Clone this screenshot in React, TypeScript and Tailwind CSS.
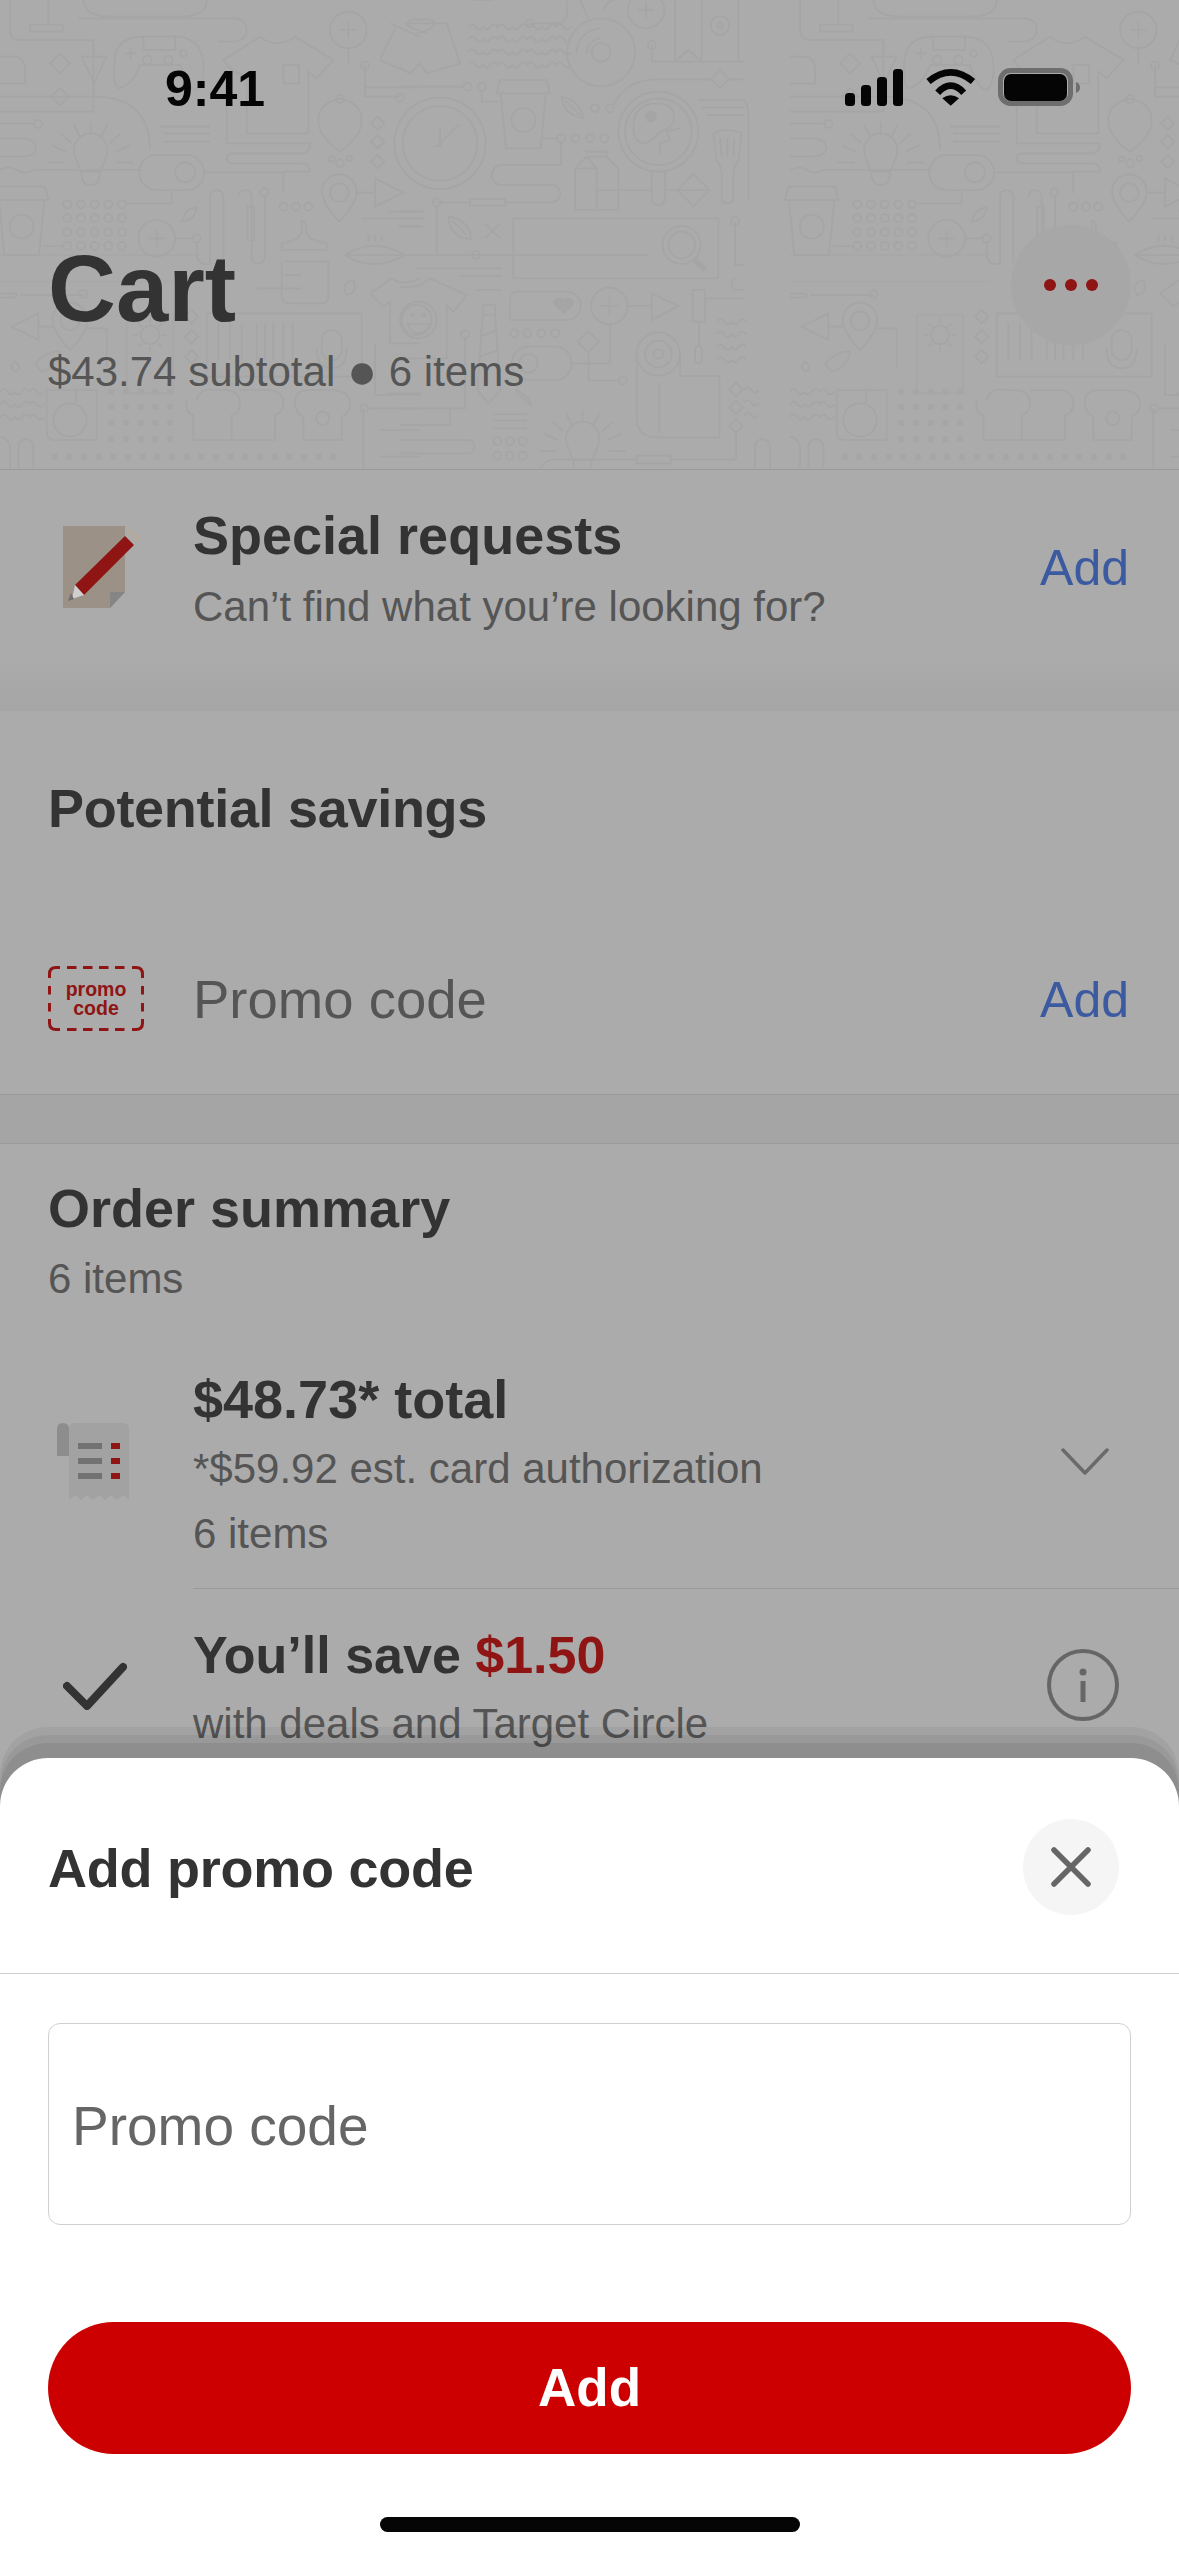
import React from "react";

const FONT = "font-['Liberation_Sans',Arial,sans-serif]";

function range(from: number, to: number, step: number) {
  const out: number[] = [];
  for (let v = from; v <= to; v += step) out.push(v);
  return out;
}

function Bulb({ x, y }: { x: number; y: number }) {
  return (
    <g transform={`translate(${x} ${y})`}>
      <path d="M-28 75 Q-50 30 -50 10 A50 50 0 0 1 50 10 Q50 30 28 75 Q28 115 0 115 Q-28 115 -28 75 Z M-28 75 H28" />
      <path d="M0 -75 V-35 M-50 -65 L-32 -30 M50 -65 L32 -30 M-90 -40 L-58 -10 M90 -40 L58 -10 M-118 -5 L-75 15 M118 -5 L75 15 M-130 48 H-78 M130 48 H78" />
    </g>
  );
}

function Cup({ x, y }: { x: number; y: number }) {
  return (
    <g transform={`translate(${x} ${y})`}>
      <path d="M-80 -80 L-70 -120 H70 L80 -80 Z M-68 -80 L-52 85 H52 L68 -80" />
      <circle cx="0" cy="0" r="36" />
    </g>
  );
}

function Plus({ x, y }: { x: number; y: number }) {
  return (
    <g transform={`translate(${x} ${y})`}>
      <circle r="55" />
      <path d="M-25 0 H25 M0 -25 V25" />
    </g>
  );
}

function Diamond({ x, y, r = 26 }: { x: number; y: number; r?: number }) {
  return <path d={`M${x - r} ${y} L${x} ${y - r} L${x + r} ${y} L${x} ${y + r} Z`} />;
}

function Pin({ x, y }: { x: number; y: number }) {
  return (
    <g transform={`translate(${x} ${y})`}>
      <path d="M0 75 Q-52 20 -52 -15 A52 52 0 0 1 52 -15 Q52 20 0 75 Z" />
      <circle cx="0" cy="-12" r="28" />
    </g>
  );
}

function Waves({ x, y, w, rows }: { x: number; y: number; w: number; rows: number }) {
  const step = 44;
  let d = "";
  for (let r = 0; r < rows; r++) {
    d += `M${x} ${y + r * 38}`;
    for (let i = 0; i * step < w; i++) {
      d += ` q${step / 4} ${i % 2 ? 16 : -16} ${step / 2} 0 t${step / 2} 0`;
    }
    d += " ";
  }
  return <path d={d} />;
}

// line-art wallpaper behind the cart header; coordinates are in 3x pixels
function HeaderPattern() {
  return (
    <svg className="absolute inset-0" width="1179" height="468" viewBox="0 0 3537 1404" fill="none" stroke="#a5a5a5" strokeWidth="5">
      <defs>
        <g id="tile">
          {/* left third */}
          <path d="M30 0 V90 Q30 120 60 120 H280 V335 H0 M90 75 H188 V95 H90 Z M145 0 V75" />
          <path d="M235 55 H700 Q740 55 740 90 Q740 125 690 125 H655" />
          <path d="M250 0 Q255 50 330 50 H540 Q620 50 620 0" />
          <path d="M355 265 Q335 250 345 170 Q355 110 430 110 H525 Q600 110 610 185 Q615 250 590 270 Q560 265 540 195 H420 Q400 255 355 265 Z M430 110 V150 H525 V110" />
          <path d="M375 160 H410 M392 143 V177" />
          <circle cx="442" cy="180" r="13" /><circle cx="505" cy="180" r="13" /><circle cx="550" cy="160" r="10" />
          <Diamond x={180} y={190} r={30} />
          <path d="M245 170 H320 L282 250 Z" />
          <path d="M0 170 H40 Q75 170 75 210 V250 H0" />
          <Diamond x={180} y={290} r={26} />
          <path d="M0 290 H280 Q450 290 450 450" />
          <path d="M0 370 H100 M0 415 H60 Q108 415 108 445 Q108 470 60 470 H0" />
          <circle cx="115" cy="372" r="12" />
          <Bulb x={272} y={440} />
          <path d="M480 380 H630 M490 400 H630 M490 425 H630" />
          <path d="M670 180 L780 110 Q830 150 885 110 L1000 180 L950 235 L925 215 V400 H740 V225 Q700 225 670 180 Z M680 300 V430 H930 Q930 460 905 460 H700 Q680 460 680 475 Q680 490 700 490 H905 Q930 490 930 515 H850 V580" />
          <path d="M850 195 H897 V250 H850 Z" />
          <path d="M1020 295 Q1085 310 1085 360 Q1085 410 1020 455 Q955 410 955 360 Q955 310 1020 295 Z" />
          <circle cx="1020" cy="297" r="12" />
          <Diamond x={1133} y={370} r={20} /><Diamond x={1133} y={425} r={20} /><Diamond x={1133} y={485} r={20} />
          <circle cx="995" cy="477" r="8" /><circle cx="1020" cy="490" r="12" /><circle cx="1048" cy="475" r="8" />
          <Plus x={1045} y={90} />
          <path d="M1045 145 V195 M1095 195 V290 H1200 M1095 262 H1260" />
          <circle cx="1095" cy="197" r="12" /><circle cx="1200" cy="293" r="12" />
          <path d="M1170 70 L1260 110 M1140 180 L1190 75 M1140 180 L1230 220" />
          <path d="M0 510 Q30 495 50 510 T100 510 H425 M470 465 H560 A52 52 0 0 1 560 570 H470 A52 52 0 0 1 470 465 Z M610 517 H850" />
          <circle cx="555" cy="517" r="30" />
          <path d="M515 570 V610 H380" />
          <Cup x={65} y={680} />
          {range(202, 367, 41).map((x) => range(613, 738, 41.6).map((y) => <circle key={`${x}-${y}`} cx={x} cy={y} r="12" />))}
          <path d="M130 738 H190" />
          <Plus x={470} y={715} />
          <path d="M525 715 H578" />
          <circle cx="590" cy="715" r="12" />
          <path d="M590 728 V770 A30 30 0 0 0 630 790 V590 A20 20 0 0 1 670 590 V790 M715 590 A20 20 0 0 1 755 590 V770 A20 20 0 0 0 795 770 V590" />
          <circle cx="793" cy="577" r="12" />
          <path d="M742 620 H762 V720 H742 Z" />
          <path d="M545 665 Q555 625 590 622 Q585 660 545 665 Z" />
          <circle cx="850" cy="620" r="12" /><circle cx="888" cy="620" r="12" /><circle cx="925" cy="620" r="12" />
          <Pin x={1018} y={590} />
          <path d="M1070 578 H1125 M1125 535 L1210 578 L1125 620 Z" />
          <path d="M1085 655 H1260 M1165 635 H1260 M1195 678 H1260" />
          <path d="M905 662 Q918 660 918 690 Q918 720 980 730 V750 H845 V730 Q905 720 905 690 Z M855 785 H985 V890 Q985 910 965 910 H870 Q845 910 845 890 V785 M850 825 H905 M850 865 H905" />
          <path d="M1035 765 Q1120 710 1215 765 Q1120 820 1035 765 Z M1035 765 H1215 M1105 705 V725 M1125 705 V725 M1145 705 V725" />
          <path d="M0 765 H600 M0 845 H600" strokeOpacity="0.5" />
          <path d="M0 880 H40 Q50 880 50 885 Q50 893 35 893 H0 M60 885 H250" />
          <circle cx="250" cy="882" r="12" />
          <path d="M770 865 H845 M1060 840 Q1020 850 1040 885 Q1075 880 1060 840 Z" />
          <path d="M35 980 L115 940 V1020 Z M115 980 H160" />
          <Pin x={210} y={975} />
          <path d="M260 985 H320 V1100" />
          <path d="M380 945 H520 V1180 H380 Z" strokeOpacity="0.6" />
          <circle cx="450" cy="1005" r="28" />
          <path d="M450 955 V970 M450 1040 V1055 M400 1005 H415 M485 1005 H500 M415 970 L425 980 M475 1030 L485 1040 M485 970 L475 980 M425 1030 L415 1040" />
          <Diamond x={575} y={950} r={20} /><Diamond x={575} y={1010} r={20} /><Diamond x={575} y={1070} r={20} />
          <path d="M620 940 H1085 V1130 H620 Z" />
          <path d="M655 970 V1080 M690 970 V1080 M725 970 V1080 M770 970 V1080 M795 970 V1080 M820 970 V1080 M850 970 V1080 M878 970 V1080" />
          <path d="M965 1020 A30 30 0 0 1 1025 1020 V1050 A30 30 0 0 1 965 1050 Z M950 1045 Q950 1105 995 1105 Q1040 1105 1040 1045" />
          <path d="M1110 880 L1175 835 Q1210 860 1260 835 M1110 880 L1150 920 L1170 905 V1030 H1260 M1125 1030 V1185 H1260" />
          <circle cx="1250" cy="960" r="45" />
          <path d="M45 1085 Q25 1100 45 1115 Q70 1105 45 1085 Z M105 1090 Q145 1050 180 1055 Q175 1100 125 1115 Z" />
          <Waves x={0} y={1175} w={100} rows={3} />
          <path d="M140 1170 H290 V1320 H165 Q140 1320 140 1295 Z" />
          <circle cx="210" cy="1260" r="50" />
          <path d="M228 1170 V1210" />
          <path d="M0 1310 Q25 1315 30 1340 V1404 M55 1404 V1340 A22 22 0 0 1 100 1340 V1404" />
          <path d="M325 1175 H520 M325 1220 H520 M325 1268 H520 M325 1318 H520" strokeWidth="18" strokeDasharray="18 26" stroke="#a6a6a6" />
          <path d="M155 1370 H1035" strokeWidth="18" strokeDasharray="18 26" stroke="#a6a6a6" />
          <path d="M590 1200 A40 40 0 0 1 640 1170 H670 Q720 1170 720 1210 Q720 1240 695 1245 V1320 H580 V1245 Q555 1240 560 1200" />
          <path d="M720 1170 H800 Q850 1170 850 1210 Q850 1240 825 1245 V1320 H695" />
          <path d="M930 1170 H1000 Q1050 1175 1050 1210 Q1050 1240 1025 1250 V1320 H910 V1250 Q885 1240 885 1205 Q885 1170 930 1170 Z" />
          <circle cx="968" cy="1255" r="20" />
          <path d="M1090 1225 V1404 M1104 1225 H1260 M1160 1180 H1260 V1185 M1140 1290 H1260 M1140 1370 H1260" />
          <circle cx="1092" cy="1225" r="12" />

          {/* middle third */}
          <g transform="translate(1200 0)">
            <path d="M15 70 H140 L180 190 L80 220 L60 190 L30 220 L0 200" />
            <path d="M60 60 Q30 50 20 75 Q60 95 80 100 M60 60 Q90 50 105 70 Q90 95 50 100" />
            <Waves x={205} y={80} w={265} rows={4} />
            <path d="M390 70 H470 A30 30 0 0 0 500 30 V0 M220 0 H280" />
            <circle cx="390" cy="70" r="12" />
            <circle cx="603" cy="157" r="102" /><circle cx="603" cy="157" r="28" />
            <path d="M530 160 A73 73 0 0 1 600 85 M560 160 A45 45 0 0 1 600 115" />
            <path d="M540 0 L565 55 M610 30 Q625 0 645 0" />
            <Plus x={738} y={30} />
            <path d="M755 135 V185 H1032 M825 0 V185 L865 150 L905 185 V0" />
            <circle cx="755" cy="135" r="12" />
            <circle cx="960" cy="76" r="28" /><circle cx="960" cy="76" r="8" />
            <path d="M1015 0 V185" />
            <Diamond x={960} y={237} r={28} />
            <path d="M0 260 H190" />
            <circle cx="202" cy="260" r="12" /><circle cx="245" cy="260" r="12" />
            <path d="M245 272 V305 H295" />
            <circle cx="120" cy="430" r="137" /><circle cx="120" cy="430" r="112" />
            <path d="M178 372 L110 440 M120 382 V440 M105 440 L125 430" />
            <Cup x={370} y={360} />
            <path d="M430 415 H470" />
            <circle cx="483" cy="415" r="12" /><circle cx="526" cy="415" r="12" /><circle cx="570" cy="415" r="12" /><circle cx="613" cy="415" r="12" />
            <path d="M483 428 V495 H305 A30 30 0 0 0 305 555 H455 A25 25 0 0 1 455 607 H315 M110 607 H210 M110 620 V765" />
            <circle cx="110" cy="607" r="12" />
            <path d="M210 597 H315 V617 H210 Z" />
            <path d="M485 290 Q540 300 550 355 Q490 345 485 290 Z M495 300 L540 345" />
            <circle cx="585" cy="325" r="12" /><circle cx="630" cy="325" r="12" />
            <path d="M640 315 Q680 238 770 238 H935 M985 238 H1032" />
            <circle cx="775" cy="395" r="120" /><circle cx="775" cy="395" r="100" />
            <path d="M700 385 Q700 310 770 310 Q822 310 822 350 Q822 385 780 395 Q750 430 730 430 Q700 425 700 385 Z" />
            <circle cx="753" cy="350" r="15" fill="#a5a5a5" />
            <path d="M780 465 V430 L810 420 L800 395 L840 385" />
            <path d="M755 515 V595 A20 20 0 0 0 795 595 V515" />
            <path d="M940 400 Q980 380 1025 400 L1015 480 Q1000 505 1000 520 V600 A20 20 0 0 1 965 600 V520 Q965 505 950 480 Z M960 415 L965 470 M982 415 V470 M1003 415 L1000 470" />
            <path d="M895 300 H1032 M905 322 H1032 M918 345 H1032 M1032 300 Q1045 310 1045 350 V600" />
            <path d="M525 630 V505 L560 470 H620 L655 505 V630 Z M525 505 H590 V630 M560 470 L590 505 M555 455 H620 V470 M590 570 H755" />
            <Diamond x={880} y={570} r={48} />
            <path d="M795 570 H832 M835 570 H925" />
            <path d="M340 655 H955 V835 H340 Z M0 765 H745" />
            <circle cx="227" cy="765" r="12" />
            <circle cx="845" cy="735" r="57" /><circle cx="845" cy="735" r="40" />
            <path d="M880 775 L915 810" strokeWidth="16" />
            <path d="M145 650 Q210 660 213 717 Q150 715 145 650 Z M155 660 L200 705 M255 670 L300 715 M300 670 L255 715" />
            <path d="M0 635 H70 M0 655 H70 M0 680 H70" />
            <path d="M50 805 H305 M180 828 H305 M228 870 H305" />
            <path d="M0 860 Q50 870 90 835 L200 885 L160 935 L140 915 V1075 H0" />
            <circle cx="55" cy="960" r="55" />
            <circle cx="38" cy="945" r="4" /><circle cx="72" cy="945" r="4" />
            <path d="M22 972 H88 Q75 1000 55 1000 Q35 1000 22 972 Z" />
            <circle cx="195" cy="1003" r="12" />
            <path d="M195 1015 V1225 H0 M150 1225 V1275 H0" />
            <path d="M248 915 H285 V945 H248 Z M248 945 L232 1170 L265 1210 L302 1170 L285 945 M240 1010 L290 990 M238 1070 L295 1050" />
            <path d="M355 875 H500 A42 42 0 0 1 500 960 H330 V905 Q330 875 355 875 Z" />
            <path d="M490 935 Q460 915 462 905 Q465 890 490 900 Q515 890 520 905 Q520 915 490 940 Z" fill="#a5a5a5" />
            <circle cx="628" cy="918" r="55" />
            <path d="M600 918 H656 M628 890 V946 M685 918 H755 M755 880 L835 918 L755 960 Z" />
            <circle cx="343" cy="1000" r="12" /><circle cx="382" cy="1000" r="12" /><circle cx="424" cy="1000" r="12" /><circle cx="466" cy="1000" r="12" />
            <path d="M630 975 V1090 H510 M385 1040 H465 A50 50 0 0 1 465 1140 H385 A50 50 0 0 1 385 1040 Z" />
            <circle cx="385" cy="1090" r="28" />
            <Diamond x={565} y={1025} r={32} />
            <path d="M565 1058 V1142 H655" />
            <circle cx="668" cy="1142" r="12" />
            <path d="M878 870 H915 V965 H878 Z M897 965 V1040 M885 1045 Q897 1030 905 1045 V1085 Q897 1095 885 1085 Z" />
            <path d="M915 895 H1032" />
            <Waves x={950} y={965} w={80} rows={4} />
            <circle cx="775" cy="1062" r="65" /><circle cx="775" cy="1062" r="40" /><circle cx="775" cy="1062" r="14" />
            <path d="M710 1062 V1250 Q710 1312 770 1312 H958 V1128 H840 V1062 M778 1150 V1300" />
            <Diamond x={1008} y={1168} r={20} /><Diamond x={1008} y={1222} r={20} /><Diamond x={1008} y={1278} r={20} />
            <Waves x={1032} y={1170} w={40} rows={3} />
            <path d="M1005 665 V795 H1032 M1005 835 A20 20 0 0 0 1005 870 H1032" />
            <circle cx="1005" cy="663" r="12" />
            <Bulb x={548} y={1305} />
            <path d="M280 1242 H380 M280 1262 H380 M280 1285 H380" />
            <path d="M0 1320 H210 A22 22 0 0 1 210 1360 H0" />
            <circle cx="292" cy="1323" r="12" /><circle cx="330" cy="1323" r="12" /><circle cx="368" cy="1323" r="12" />
            <circle cx="292" cy="1367" r="12" /><circle cx="330" cy="1367" r="12" /><circle cx="368" cy="1367" r="12" />
            <path d="M710 1367 H812 V1390 H710 Z M420 1404 Q440 1375 470 1378 H710 M812 1378 H1008 V1290" />
            <path d="M1065 1404 V1340 A22 22 0 0 1 1110 1340 V1404" />
            <path d="M375 1200 Q340 1170 350 1170 Q390 1190 392 1215 Z" />
          </g>
        </g>
      </defs>
      <use href="#tile" />
      <use href="#tile" x="2370" />
    </svg>
  );
}

function StatusIcons() {
  return (
    <svg width="236" height="40" viewBox="0 0 236 40" className="shrink-0">
      <rect x="0" y="25" width="10" height="13" rx="3.5" fill="#050505" />
      <rect x="16" y="17" width="10" height="21" rx="3.5" fill="#050505" />
      <rect x="32" y="9" width="10" height="29" rx="3.5" fill="#050505" />
      <rect x="48" y="1" width="10" height="37" rx="3.5" fill="#050505" />
      <path d="M83.500 13.500 Q105.700 -4.700 128 13.500" fill="none" stroke="#050505" strokeWidth="6.700" />
      <path d="M92.700 24.700 Q105.700 10.700 118.700 24.700" fill="none" stroke="#050505" strokeWidth="6.700" />
      <path d="M97.300 30.300 Q105.700 24 114 30.300 L105.700 37.700 Z" fill="#050505" />
      <rect x="155.500" y="2.500" width="70" height="33" rx="10" fill="none" stroke="#6e6e6e" strokeWidth="5" />
      <rect x="159" y="6" width="63" height="27" rx="7" fill="#050505" />
      <path d="M231 14 Q235 15.500 235 19.500 Q235 23.500 231 25 Z" fill="#6e6e6e" />
    </svg>
  );
}

function NoteIcon() {
  return (
    <svg width="78" height="83" viewBox="0 0 78 83" className="shrink-0">
      <path d="M0 0 H62 V66 L47 82 H0 Z" fill="#9c9187" />
      <path d="M47 66 H62 L47 82 Z" fill="#858585" />
      <path d="M64 4 L66 3 Q68 3 70 5 L76 10 Q78 12 76 14 L73 17 Z" fill="#b3a99e" />
      <path d="M62 10 L71 19 L21 69 L12 59 Z" fill="#8f1414" />
      <path d="M12 59 L21 69 L9 73 Z" fill="#cfcfcf" />
      <path d="M8 67 L11 73 L5 75 Z" fill="#6f6f6f" />
    </svg>
  );
}

function ReceiptIcon() {
  return (
    <svg width="72" height="78" viewBox="0 0 72 78" className="shrink-0">
      <path d="M12 6 Q12 0 18 0 H66 Q72 0 72 6 V77 L66 72 L60 77 L54 72 L48 77 L42 72 L36 77 L30 72 L24 77 L18 72 L12 77 Z" fill="#a2a2a2" />
      <path d="M0 33 V6 Q0 0 6 0 Q12 0 12 6 V33 Z" fill="#8d8d8d" />
      <path d="M21 20 H45 V26 H21 Z M21 35 H45 V41 H21 Z M21 50 H45 V56 H21 Z" fill="#727272" />
      <path d="M54 20 H63 V26 H54 Z M54 35 H63 V41 H54 Z M54 50 H63 V56 H54 Z" fill="#8f1414" />
    </svg>
  );
}

function PromoBadge() {
  return (
    <div className="relative flex h-[65px] w-[96px] items-center justify-center text-center text-[19.5px] leading-[19px] font-bold text-[#8f1414]">
      <svg className="absolute inset-0" width="96" height="65" viewBox="0 0 96 65" fill="none" stroke="#8f1414" strokeWidth="3">
        <path d="M1.500 12 V8 Q1.500 1.500 8 1.500 H12 M84 1.500 H88 Q94.500 1.500 94.500 8 V12 M94.500 53 V57 Q94.500 63.500 88 63.500 H84 M12 63.500 H8 Q1.500 63.500 1.500 57 V53" />
        <path d="M19 1.500 H80 M19 63.500 H80" strokeDasharray="9.500 6.500" />
        <path d="M1.500 20 V46 M94.500 20 V46" strokeDasharray="8.500 8.500" />
      </svg>
      <span>
        promo
        <br />
        code
      </span>
    </div>
  );
}

function Sub({ children }: { children: React.ReactNode }) {
  return <div className="text-[42px] leading-[50px] text-[#555555]">{children}</div>;
}

function Heading({ children }: { children: React.ReactNode }) {
  return <div className="text-[54px] leading-[62px] font-bold text-[#333333]">{children}</div>;
}

export default function App() {
  return (
    <div className={`${FONT} flex h-[2556px] w-[1179px] flex-col overflow-hidden bg-[#ababab]`}>
      <div className="min-h-0 flex-1 overflow-hidden">
        {/* Header */}
        <header className="relative h-[470px] border-b border-[#9a9a9a]">
          <HeaderPattern />
          <div className="relative flex h-[119px] items-end justify-between pr-[98px] pl-[165px]">
            <span className="text-[50px] leading-[60px] font-bold text-[#050505]">9:41</span>
            <div className="mb-[11px]">
              <StatusIcons />
            </div>
          </div>
          <div className="relative mt-[120px] flex items-start justify-between px-[48px]">
            <div>
              <h1 className="text-[94px] leading-[100px] font-bold text-[#333333]">Cart</h1>
              <div className="mt-[8px] text-[42px] leading-[50px] text-[#555555]">
                $43.74 subtotal <span className="relative top-[2px] text-[50px] leading-[0]">●</span> 6 items
              </div>
            </div>
            <button className="-mt-[14px] flex h-[120px] w-[120px] items-center justify-center gap-[9px] rounded-full bg-[#a7a7a7]">
              <span className="h-[12px] w-[12px] rounded-full bg-[#8f1414]" />
              <span className="h-[12px] w-[12px] rounded-full bg-[#8f1414]" />
              <span className="h-[12px] w-[12px] rounded-full bg-[#8f1414]" />
            </button>
          </div>
        </header>

        {/* Special requests */}
        <section className="flex h-[191px] items-start pt-[34px] pr-[50px]">
          <div className="mt-[22px] w-[193px] shrink-0 pl-[63px]">
            <NoteIcon />
          </div>
          <div>
            <Heading>Special requests</Heading>
            <div className="mt-[16px]">
              <Sub>Can’t find what you’re looking for?</Sub>
            </div>
          </div>
          <button className="mt-[34px] ml-auto text-[50px] leading-[60px] text-[#3b5a9f]">Add</button>
        </section>
        <div className="h-[50px] bg-gradient-to-b from-[#ababab] to-[#a5a5a5]" />

        {/* Potential savings */}
        <section className="h-[384px] border-b border-[#9a9a9a] pt-[66px]">
          <div className="px-[48px] tracking-[-0.3px]">
            <Heading>Potential savings</Heading>
          </div>
          <div className="mt-[130px] flex h-[62px] items-center pr-[50px]">
            <div className="-mt-[3px] w-[193px] shrink-0 pl-[48px]">
              <PromoBadge />
            </div>
            <span className="text-[54.5px] leading-[62px] text-[#555555]">Promo code</span>
            <button className="ml-auto text-[50px] leading-[60px] text-[#3b5a9f]">Add</button>
          </div>
        </section>
        <div className="h-[48px] bg-[#a5a5a5]" />

        {/* Order summary */}
        <section className="border-t border-[#9a9a9a] pt-[33px]">
          <div className="px-[48px]">
            <Heading>Order summary</Heading>
            <div className="mt-[15px]">
              <Sub>6 items</Sub>
            </div>
          </div>
          <div className="mt-[64px] flex">
            <div className="w-[193px] shrink-0 pt-[55px] pl-[57px]">
              <ReceiptIcon />
            </div>
            <div className="flex flex-1 items-start border-b border-[#9a9a9a] pr-[70px] pb-[29px]">
              <div>
                <Heading>$48.73* total</Heading>
                <div className="mt-[14px]">
                  <Sub>*$59.92 est. card authorization</Sub>
                </div>
                <div className="mt-[15px]">
                  <Sub>6 items</Sub>
                </div>
              </div>
              <svg width="48" height="27" viewBox="0 0 48 27" className="mt-[80px] ml-auto" fill="none" stroke="#6a6a6a" strokeWidth="3.500" strokeLinecap="round" strokeLinejoin="round">
                <path d="M2 2 L24 25 L46 2" />
              </svg>
            </div>
          </div>
          <div className="flex">
            <div className="w-[193px] shrink-0 pt-[73px] pl-[63px]">
              <svg width="64" height="48" viewBox="0 0 64 48" fill="none" stroke="#333333" strokeWidth="8" strokeLinecap="round" strokeLinejoin="round">
                <path d="M4 24 L24 44 L60 5" />
              </svg>
            </div>
            <div className="flex flex-1 items-start pt-[35px] pr-[60px]">
              <div>
                <div className="text-[52px] leading-[62px] font-bold text-[#333333]">
                  You’ll save <span className="text-[#8f1414]">$1.50</span>
                </div>
                <div className="mt-[13px]">
                  <Sub>with deals and Target Circle</Sub>
                </div>
              </div>
              <svg width="72" height="72" viewBox="0 0 72 72" className="mt-[25px] ml-auto" fill="none" stroke="#666666" strokeWidth="4">
                <circle cx="36" cy="36" r="34" />
                <circle cx="36" cy="23" r="3.500" fill="#666666" stroke="none" />
                <rect x="33.500" y="32" width="5" height="21" fill="#666666" stroke="none" />
              </svg>
            </div>
          </div>
        </section>
      </div>

      {/* Promo code sheet */}
      <div className="relative z-10 h-[798px] shrink-0 rounded-t-[48px] bg-white shadow-[0_-15px_0_rgba(0,0,0,0.07),0_-23px_0_rgba(0,0,0,0.05),0_-31px_0_rgba(0,0,0,0.05)]">
        <div className="flex h-[216px] items-center justify-between border-b border-[#d0d0d0] pr-[60px] pl-[48px]">
          <h2 className="mt-[5px] text-[54px] leading-[62px] font-bold tracking-[-0.25px] text-[#333333]">Add promo code</h2>
          <button className="mt-[2px] flex h-[96px] w-[96px] items-center justify-center rounded-full bg-[#f5f5f5]">
            <svg width="40" height="40" viewBox="0 0 40 40" fill="none" stroke="#666666" strokeWidth="5.500" strokeLinecap="round">
              <path d="M3 3 L37 37 M37 3 L3 37" />
            </svg>
          </button>
        </div>
        <div className="px-[48px]">
          <div className="mt-[49px] flex h-[202px] w-[1083px] items-center rounded-[12px] border border-[#d0d0d0] pt-[3px] pl-[23px] text-[55px] leading-[62px] text-[#666666]">
            Promo code
          </div>
          <button className="mt-[97px] h-[132px] w-[1083px] rounded-full bg-[#cc0000] text-[53px] leading-[62px] font-bold text-white">
            Add
          </button>
        </div>
        <div className="mx-auto mt-[63px] h-[15px] w-[420px] rounded-full bg-[#050505]" />
      </div>
    </div>
  );
}
